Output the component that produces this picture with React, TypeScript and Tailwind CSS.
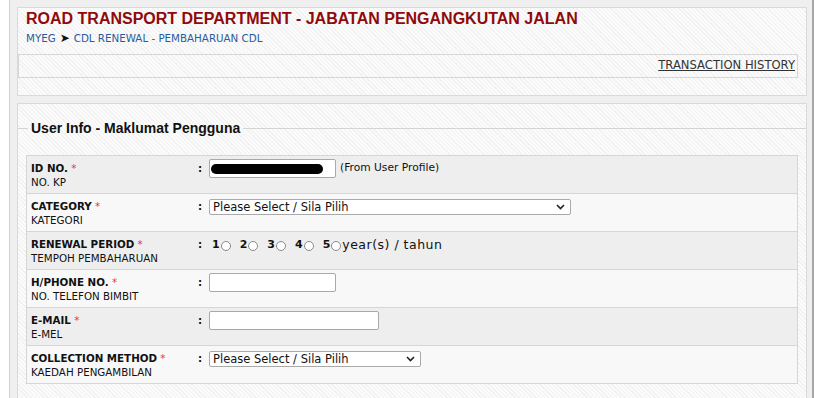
import React from 'react';

// light diagonal hatching used behind the panels
const hatch =
  'bg-[repeating-linear-gradient(45deg,#f1f1f1_0px,#f1f1f1_1px,#fbfbfb_1px,#fbfbfb_3px)]';

function Chevron() {
  return (
    <svg width="9" height="6" viewBox="0 0 9 6" className="absolute right-[6px] top-1/2 -translate-y-1/2 pointer-events-none">
      <path d="M1 1 L4.5 4.5 L8 1" fill="none" stroke="#222" strokeWidth="1.6" />
    </svg>
  );
}

function SelectBox({ width }: { width: string }) {
  return (
    <div className={`relative ${width}`}>
      <select className="w-full h-[16px] appearance-none rounded-[2px] border border-[#a9a9a9] bg-white pl-[3px] text-[11.5px] leading-[14px] text-[#111] outline-none">
        <option>Please Select / Sila Pilih</option>
      </select>
      <Chevron />
    </div>
  );
}

function TextBox({ width, children }: { width: string; children?: React.ReactNode }) {
  return (
    <div className={`flex h-[19px] items-center rounded-[2px] border border-[#a9a9a9] bg-white px-[1px] ${width}`}>
      {children}
    </div>
  );
}

function Radio({ n, last }: { n: number; last?: boolean }) {
  return (
    <span className={`inline-flex items-center ${last ? 'mr-[1px]' : 'mr-[9px]'}`}>
      <b className="mr-[1px]">{n}</b>
      <span className="mt-[1px] inline-block h-[10px] w-[10px] rounded-full border border-[#8a8a8a] bg-white" />
    </span>
  );
}

type Row = { label: string; sub: string; field: React.ReactNode; pad: string };

const rows: Row[] = [
  {
    label: 'ID NO.',
    sub: 'NO. KP',
    pad: 'pt-[3px]',
    field: (
      <div className="flex items-center">
        <TextBox width="w-[127px]">
          <span className="block h-[10px] w-[112px] rounded-full bg-black" />
        </TextBox>
        <span className="ml-[4px] text-[10.7px]">(From User Profile)</span>
      </div>
    ),
  },
  {
    label: 'CATEGORY',
    sub: 'KATEGORI',
    pad: 'pt-[5px]',
    field: <SelectBox width="w-[362px]" />,
  },
  {
    label: 'RENEWAL PERIOD',
    sub: 'TEMPOH PEMBAHARUAN',
    pad: 'pt-[4px]',
    field: (
      <div className="flex items-center pl-[3px] text-[11px]">
        {[1, 2, 3, 4, 5].map((n) => (
          <Radio key={n} n={n} last={n === 5} />
        ))}
        <span className="text-[12.5px] tracking-[0.5px]">year(s) / tahun</span>
      </div>
    ),
  },
  {
    label: 'H/PHONE NO.',
    sub: 'NO. TELEFON BIMBIT',
    pad: 'pt-[3px]',
    field: <TextBox width="w-[127px]" />,
  },
  {
    label: 'E-MAIL',
    sub: 'E-MEL',
    pad: 'pt-[3px]',
    field: <TextBox width="w-[170px]" />,
  },
  {
    label: 'COLLECTION METHOD',
    sub: 'KAEDAH PENGAMBILAN',
    pad: 'pt-[5px]',
    field: <SelectBox width="w-[212px]" />,
  },
];

export default function App() {
  return (
    <div className="h-[398px] w-[840px] overflow-hidden bg-white font-['DejaVu_Sans','Liberation_Sans',sans-serif] text-[10.3px] text-[#111]">
      <div className="ml-[9px] h-full w-[805px] border-l border-r-2 border-l-[#cfcfcf] border-r-[#a6a6a6] bg-[#efefef] pt-[7px]">
        {/* Header panel */}
        <div className={`ml-[7px] h-[89px] w-[790px] border border-[#dadada] ${hatch}`}>
          <h1 className="pl-[8px] pt-[1px] font-['Liberation_Sans',Arial,sans-serif] text-[16px] font-bold leading-[20px] text-[#8f0a0a]">
            ROAD TRANSPORT DEPARTMENT - JABATAN PENGANGKUTAN JALAN
          </h1>
          <div className="mt-[2px] flex items-center pl-[8px] leading-[14px] text-[#2a5c9c]">
            <span>MYEG</span>
            <span className="mx-[4px] text-[12px] leading-[14px] text-[#111]">➤</span>
            <span>CDL RENEWAL - PEMBAHARUAN CDL</span>
          </div>
          <div className={`mt-[9px] flex h-[24px] w-[780px] items-center justify-end border border-[#d6d6d6] pr-[2px] ${hatch}`}>
            <a href="#" className="text-[11.6px] text-[#333] underline">
              TRANSACTION HISTORY
            </a>
          </div>
        </div>

        {/* User info panel */}
        <div className={`ml-[7px] mt-[7px] h-[300px] w-[790px] border border-[#dadada] ${hatch}`}>
          <div className="mt-[16px] flex items-center">
            <div className="w-[10px] border-t border-[#d4d4d4]" />
            <span className="px-[3px] font-['Liberation_Sans',Arial,sans-serif] text-[14px] font-bold leading-[16px] text-[#111]">
              User Info - Maklumat Pengguna
            </span>
            <div className="flex-1 border-t border-[#d4d4d4]" />
          </div>

          <div className="ml-[8px] mt-[19px] w-[772px] border border-b-0 border-[#d6d6d6]">
            {rows.map((r, i) => (
              <div
                key={r.label}
                className={`flex h-[38px] border-b border-[#d6d6d6] ${i % 2 === 0 ? 'bg-[#eeeeee]' : 'bg-[#f8f8f8]'}`}
              >
                <div className="w-[171px] pl-[4px] pt-[5px] leading-[14px]">
                  <div>
                    <b>{r.label}</b> <span className="text-[#e0393e]">*</span>
                  </div>
                  <div>{r.sub}</div>
                </div>
                <div className="w-[11px] pt-[5px] font-bold leading-[14px]">:</div>
                <div className={r.pad}>{r.field}</div>
              </div>
            ))}
          </div>
        </div>
      </div>
    </div>
  );
}
